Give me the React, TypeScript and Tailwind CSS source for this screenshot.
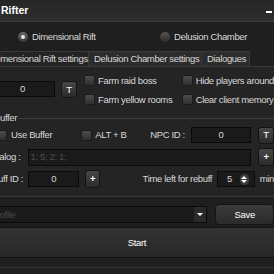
import React from "react";

const btn =
  "flex items-center justify-center rounded-[3px] border border-[#141414] bg-gradient-to-b from-[#474747] to-[#2b2b2b] text-white";
const field = "border border-[#0a0a0a] bg-[#1a1a1a]";

const Radio = ({ on }: { on?: boolean }) => (
  <div
    className={
      "flex h-[10px] w-[10px] items-center justify-center rounded-full " +
      (on
        ? "bg-gradient-to-b from-[#6a6a6a] to-[#3a3a3a]"
        : "bg-gradient-to-b from-[#555555] to-[#2c2c2c]")
    }
  >
    {on && <div className="h-[4px] w-[4px] rounded-full bg-[#e8e8e8]" />}
  </div>
);

const Check = () => (
  <div className="h-[11px] w-[11px] shrink-0 rounded-[2px] border border-[#1b1b1b] bg-gradient-to-b from-[#4c4c4c] to-[#2f2f2f]" />
);

const CheckRow = ({ label }: { label: string }) => (
  <div className="flex h-[19px] items-center gap-[3px] whitespace-nowrap">
    <Check />
    <span>{label}</span>
  </div>
);

export default function App() {
  return (
    <div
      className="h-[274px] w-[274px] overflow-hidden bg-[#1f1f1f] text-[9.5px] leading-none tracking-[-0.35px] text-[#d8d8d8]"
      style={{ fontFamily: '"Liberation Sans", Arial, sans-serif' }}
    >
      {/* title bar */}
      <div className="flex h-[22px] items-center justify-between border-b border-[#3a3a3a] bg-gradient-to-b from-[#252525] to-[#2f2f2f]">
        <span className="pl-[1px] text-[10.5px] font-bold tracking-normal text-white">Rifter</span>
        <div className="mr-[2px] mt-[3px] h-[2px] w-[6px] bg-white" />
      </div>

      {/* mode */}
      <div className="flex h-[29px] items-center pl-[18px]">
        <div className="flex w-[142px] items-center gap-[4px] whitespace-nowrap">
          <Radio on />
          <span>Dimensional Rift</span>
        </div>
        <div className="flex items-center gap-[4px] whitespace-nowrap">
          <Radio />
          <span>Delusion Chamber</span>
        </div>
      </div>

      {/* tabs */}
      <div className="flex h-[15px] items-stretch whitespace-nowrap">
        <div className="-ml-[14px] flex w-[103px] items-center border border-b-0 border-[#3a3a3a] bg-[#242424] pl-[5px]">
          Dimensional Rift settings
        </div>
        <div className="flex w-[113px] items-center border-r border-t border-[#3a3a3a] bg-[#2c2c2c] pl-[5px]">
          Delusion Chamber settings
        </div>
        <div className="flex w-[48px] items-center border-r border-t border-[#3a3a3a] bg-[#2c2c2c] pl-[5px]">
          Dialogues
        </div>
      </div>

      {/* pane */}
      <div className="h-[131px] border-b border-t border-[#393939] bg-[#242424]">
        <div className="flex pt-[4px]">
          <div className="mt-[10px] flex items-start">
            <div className={"-ml-[10px] flex h-[16px] w-[65px] items-center justify-center " + field}>0</div>
            <div className={"ml-[6px] h-[17px] w-[16px] " + btn}>T</div>
          </div>
          <div className="ml-[7px] flex w-[105px] flex-col">
            <CheckRow label="Farm raid boss" />
            <CheckRow label="Farm yellow rooms" />
          </div>
          <div className="flex flex-col">
            <CheckRow label="Hide players around" />
            <CheckRow label="Clear client memory" />
          </div>
        </div>

        {/* buffer group */}
        <div className="mt-[3px] flex h-[12px] items-center">
          <span className="-ml-[6px] pr-[1px]">Buffer</span>
          <div className="h-px flex-1 bg-[#3c3c3c]" />
        </div>

        <div className="mt-[2px] flex flex-col gap-[4px] whitespace-nowrap">
          <div className="flex h-[18px] items-center">
            <div className="-ml-[4px] flex w-[88px] items-center gap-[4px]">
              <Check />
              <span>Use Buffer</span>
            </div>
            <div className="flex w-[56px] items-center gap-[3px]">
              <Check />
              <span>ALT + B</span>
            </div>
            <span className="w-[51px] text-right">NPC ID :</span>
            <div className={"ml-[6px] flex h-[16px] w-[62px] items-center justify-center " + field}>0</div>
            <div className={"ml-[7px] h-[17px] w-[16px] shrink-0 " + btn}>T</div>
          </div>

          <div className="flex h-[18px] items-center">
            <span className="-ml-[30px] w-[52px] text-right">Dialog :</span>
            <div className={"ml-[7px] flex h-[17px] w-[230px] items-center pl-[2px] text-[#4e4e4e] " + field}>
              1; 5; 2; 1;
            </div>
            <div className={"ml-[7px] h-[18px] w-[16px] shrink-0 font-bold " + btn}>+</div>
          </div>

          <div className="flex h-[18px] items-center">
            <span className="-ml-[30px] w-[54px] text-right">Buff ID :</span>
            <div className={"ml-[5px] flex h-[16px] w-[52px] items-center justify-center " + field}>0</div>
            <div className={"ml-[6px] h-[18px] w-[15px] font-bold " + btn}>+</div>
            <span className="w-[114px] text-right">Time left for rebuff</span>
            <div className={"ml-[5px] flex h-[16px] w-[38px] items-center justify-between pl-[9px] pr-[5px] " + field}>
              <span>5</span>
              <div className="flex h-[11px] w-[9px] flex-col items-center justify-center gap-[1px] rounded-full bg-[#3d3d3d]">
                <div className="h-0 w-0 border-x-[3px] border-b-[3px] border-x-transparent border-b-white" />
                <div className="h-0 w-0 border-x-[3px] border-t-[3px] border-x-transparent border-t-white" />
              </div>
            </div>
            <span className="ml-[5px]">min</span>
          </div>
        </div>
      </div>

      {/* profile */}
      <div className="mt-[7px] flex h-[21px] items-center">
        <div className={"-ml-[10px] flex h-[17px] w-[223px] items-center justify-between " + field}>
          <span className="text-[#4a4a4a]">Profile</span>
          <div className="flex h-full w-[12px] items-center justify-center bg-[#2a2a2a]">
            <div className="h-0 w-0 border-x-[3px] border-t-[3px] border-x-transparent border-t-white" />
          </div>
        </div>
        <div className="ml-[8px] flex h-[21px] w-[60px] items-center justify-center rounded-[4px] border border-[#141414] bg-gradient-to-b from-[#3b3b3b] to-[#2a2a2a] text-white">
          Save
        </div>
      </div>

      {/* start */}
      <div className="mt-[2px] -mx-[4px] flex h-[31px] items-center justify-center rounded-[3px] border border-[#111111] bg-gradient-to-b from-[#333333] to-[#282828] text-white">
        Start
      </div>
      <div className="mt-[9px] h-px bg-[#343434]" />
    </div>
  );
}
